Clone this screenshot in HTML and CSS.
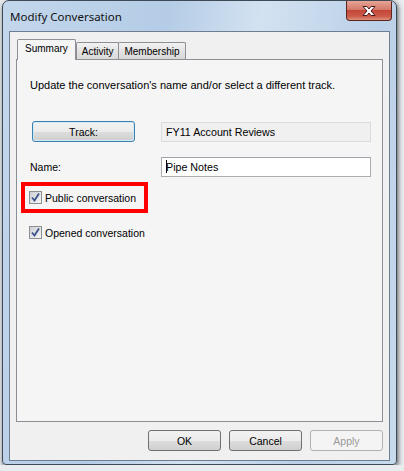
FILE: index.html
```html
<!DOCTYPE html>
<html lang="en">

<head>
	<meta charset="UTF-8">
	<title>Modify Conversation</title>
	<link rel="stylesheet" href="styles.css">
</head>

<body>
	<div class="window">
		<div class="titlebar">
			<span class="title">Modify Conversation</span>
			<div class="closeBtn">
				<svg width="18" height="12" viewBox="0 0 18 12">
					<path d="M3 1.5 L7 1.5 L9 4 L11 1.5 L15 1.5 L11 6 L15 10.5 L11 10.5 L9 8 L7 10.5 L3 10.5 L7 6 Z" fill="#fff" stroke="#4a1a1a" stroke-width="1" stroke-linejoin="round"/>
				</svg>
			</div>
		</div>
		<div class="client">
			<div class="tabStrip">
				<div class="tab selected">Summary</div>
				<div class="tab">Activity</div>
				<div class="tab">Membership</div>
			</div>
			<div class="panel">
				<p class="intro">Update the conversation's name and/or select a different track.</p>
				<div class="formGrid">
					<button class="btn trackBtn">Track:</button>
					<div class="textBox readOnly">FY11 Account Reviews</div>
					<label class="fieldLabel">Name:</label>
					<div class="textBox"><span class="caret"></span>Pipe Notes</div>
				</div>
				<div class="highlight">
					<div class="checkRow">
						<span class="checkBox">
							<svg width="11" height="11" viewBox="0 0 11 11"><path d="M2 5.5 L4.5 8.5 L9 1.5" fill="none" stroke="#3d528a" stroke-width="1.8"/></svg>
						</span>
						Public conversation
					</div>
				</div>
				<div class="checkRow opened">
					<span class="checkBox">
						<svg width="11" height="11" viewBox="0 0 11 11"><path d="M2 5.5 L4.5 8.5 L9 1.5" fill="none" stroke="#3d528a" stroke-width="1.8"/></svg>
					</span>
					Opened conversation
				</div>
			</div>
			<div class="footer">
				<button class="btn">OK</button>
				<button class="btn">Cancel</button>
				<button class="btn disabled">Apply</button>
			</div>
		</div>
	</div>
</body>

</html>
```

FILE: styles.css
```css
body {
    margin: 0;
    background-color: #e9ecef;
    font-family: "Liberation Sans", Arial, sans-serif;
    font-size: 10.5px;
    color: #000;
}
.window {
    margin-left: 2px;
    width: 393px;
    height: 463px;
    border: 1px solid #3f4a57;
    border-radius: 7px 7px 4px 4px;
    background: linear-gradient(100deg, #c3d7ec 0%, #b4cce6 35%, #d3e2f1 55%, #bad0e8 80%, #c8dbee 100%);
    box-shadow: 1px 2px 5px rgba(0,0,0,0.65);
    overflow: hidden;
}
.titlebar {
    height: 30px;
    display: flex;
    justify-content: space-between;
    align-items: flex-start;
}
.title {
    font-family: "Noto Sans", sans-serif;
    font-size: 11.5px;
    margin: 8px 0 0 7px;
    color: #111;
}
.closeBtn {
    width: 44px;
    height: 19px;
    margin-right: 4px;
    border: 1px solid #5b2420;
    border-top: none;
    border-radius: 0 0 4px 4px;
    background: linear-gradient(#e7a597 0%, #d47a69 45%, #c4473a 50%, #cc5a48 80%, #e0917a 100%);
    display: flex;
    justify-content: center;
    align-items: center;
}
.client {
    margin: 0 6px;
    border: 1px solid #6e7e90;
    background-color: #f0f0f0;
    padding: 7px 6px 0 6px;
    box-sizing: border-box;
    height: 430px;
}
.tabStrip {
    display: flex;
    height: 20px;
    align-items: flex-end;
    padding-left: 1px;
    position: relative;
    z-index: 1;
}
.tab {
    font-size: 10px;
    height: 17px;
    line-height: 17px;
    padding: 0 5px;
    border: 1px solid #8c8f95;
    border-bottom: none;
    background: linear-gradient(#f2f2f2, #e3e3e3 50%, #d9d9d9);
    margin-left: -1px;
    box-sizing: border-box;
    border-radius: 2px 2px 0 0;
}
.tab.selected {
    height: 21px;
    line-height: 18px;
    padding: 0 7px;
    margin-left: 0;
    background: #f5f5f5;
    margin-bottom: -1px;
    margin-right: 1px;
}
.panel {
    height: 363px;
    border: 1px solid #8c8f95;
    background-color: #f5f5f5;
    box-sizing: border-box;
    padding-top: 19px;
}
.intro {
    font-size: 11px;
    margin: 0 0 29px 13px;
    line-height: 13px;
}
.formGrid {
    display: grid;
    grid-template-columns: 131px 210px;
    row-gap: 15px;
    padding-left: 13px;
    align-items: center;
}
.btn {
    font-family: "Liberation Sans", Arial, sans-serif;
    font-size: 10.5px;
    color: #000;
    width: 73px;
    height: 21px;
    padding: 0;
    border: 1px solid #707070;
    border-radius: 3px;
    background: linear-gradient(#f2f2f2 0%, #ebebeb 50%, #dddddd 51%, #cfcfcf 100%);
}
.trackBtn {
    width: 103px;
    margin-left: 2px;
    border-color: #3c7fb1;
    box-shadow: inset 0 0 0 1px #cdeaf9;
}
.btn.disabled {
    color: #9a9a9a;
    border-color: #adb2b5;
    background: #f4f4f4;
}
.textBox {
    height: 20px;
    line-height: 18px;
    border: 1px solid #abadb3;
    border-top-color: #a0a5ad;
    background-color: #fff;
    padding-left: 4px;
    box-sizing: border-box;
    font-size: 10.7px;
}
.textBox.readOnly {
    border-color: #dadcde;
    background-color: #f0f0f0;
}
.caret {
    display: inline-block;
    width: 1px;
    height: 13px;
    background-color: #000;
    vertical-align: -2px;
    margin-right: -1px;
}
.highlight {
    display: inline-block;
    margin: 5px 0 0 4px;
    border: 4px solid #ff0000;
    padding: 3px 8px 3px 4px;
}
.checkRow {
    display: flex;
    align-items: center;
    gap: 3px;
    height: 17px;
}
.checkRow.opened {
    margin: 11px 0 0 12px;
}
.checkBox {
    width: 13px;
    height: 13px;
    border: 1px solid #8e8f8f;
    box-sizing: border-box;
    background: linear-gradient(135deg, #cbcfd5, #f6f6f6);
    display: flex;
    align-items: center;
    justify-content: center;
}
.footer {
    display: flex;
    justify-content: flex-end;
    gap: 8px;
    margin-top: 8px;
}
```
